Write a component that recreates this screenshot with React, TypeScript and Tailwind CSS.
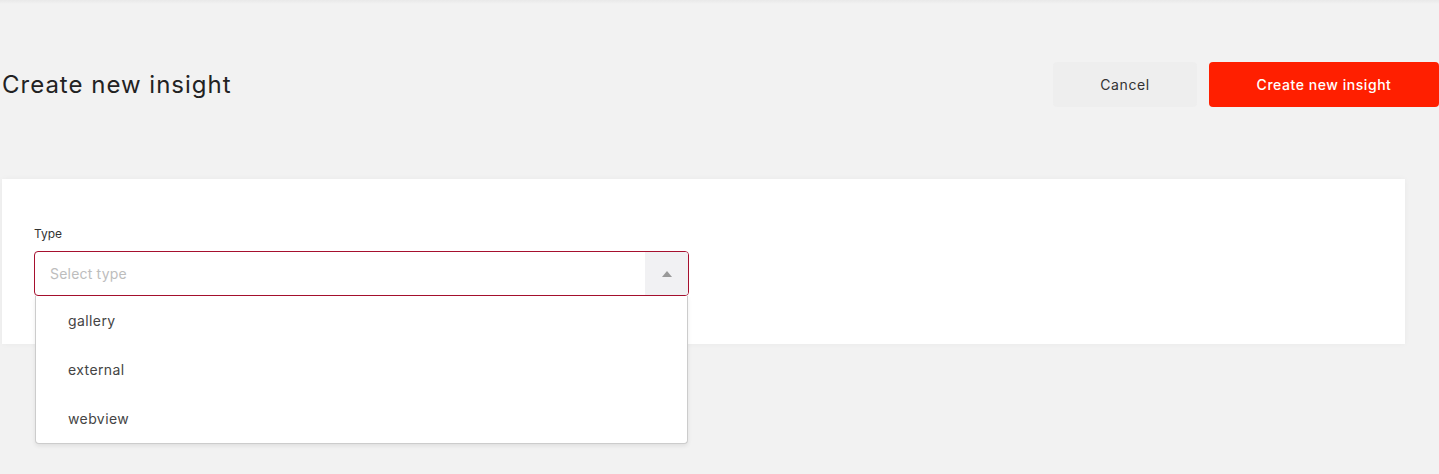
import { useState } from 'react'

const options = ['gallery', 'external', 'webview']

export default function App() {
  const [open, setOpen] = useState(true)
  const [value, setValue] = useState('')

  return (
    <div
      className="min-h-[474px] bg-[#f2f2f2] text-[#333]"
      style={{ fontFamily: 'Inter, "Noto Sans", sans-serif' }}
    >
      <div className="h-[4px] bg-gradient-to-b from-[#e9e9e9] to-[#f2f2f2]" />

      {/* Header */}
      <div className="flex items-center justify-between pt-[58px] pl-[2px]">
        <h1 className="text-[24px] font-normal tracking-[1px] text-[#222]">Create new insight</h1>
        <div className="flex gap-3">
          <button className="w-[144px] h-[45px] rounded bg-[#eeeeee] text-[14px] tracking-[0.6px] text-[#333]">
            Cancel
          </button>
          <button className="w-[230px] h-[45px] rounded bg-[#ff1f00] text-[14px] font-medium tracking-[0.55px] text-white">
            Create new insight
          </button>
        </div>
      </div>

      {/* Form card */}
      <div className="mt-[72px] ml-[2px] w-[1403px] h-[165px] bg-white shadow-[0_0_6px_rgba(0,0,0,0.04)] pt-[47px] px-[32px]">
        <label className="block text-[12px] leading-4 text-[#333] mb-[9px]">Type</label>
        <div className="relative w-[655px]">
          <div
            onClick={() => setOpen(!open)}
            className="flex h-[45px] cursor-pointer rounded border border-[#a6102e] overflow-hidden"
          >
            <div className={`flex flex-1 items-center pl-[15px] text-[14px] tracking-[0.2px] ${value ? 'text-[#333]' : 'text-[#bdbdbd]'}`}>
              {value || 'Select type'}
            </div>
            <div className="flex w-[43px] items-center justify-center bg-[#f1f1f3]">
              <svg width="10" height="6" viewBox="0 0 10 6">
                <path d="M0 6 L5 0 L10 6 Z" fill="#999" transform={open ? '' : 'rotate(180 5 3)'} />
              </svg>
            </div>
          </div>
          {open && (
            <div className="absolute left-[1px] top-full z-10 w-[653px] rounded-b border border-t-0 border-[#cccccc] bg-white shadow-[0_2px_4px_rgba(0,0,0,0.08)]">
              {options.map(opt => (
                <div
                  key={opt}
                  onClick={() => { setValue(opt); setOpen(false) }}
                  className="flex h-[49px] cursor-pointer items-center pl-[32px] text-[14px] tracking-[0.4px] text-[#444] hover:bg-[#f7f7f7]"
                >
                  {opt}
                </div>
              ))}
            </div>
          )}
        </div>
      </div>
    </div>
  )
}
